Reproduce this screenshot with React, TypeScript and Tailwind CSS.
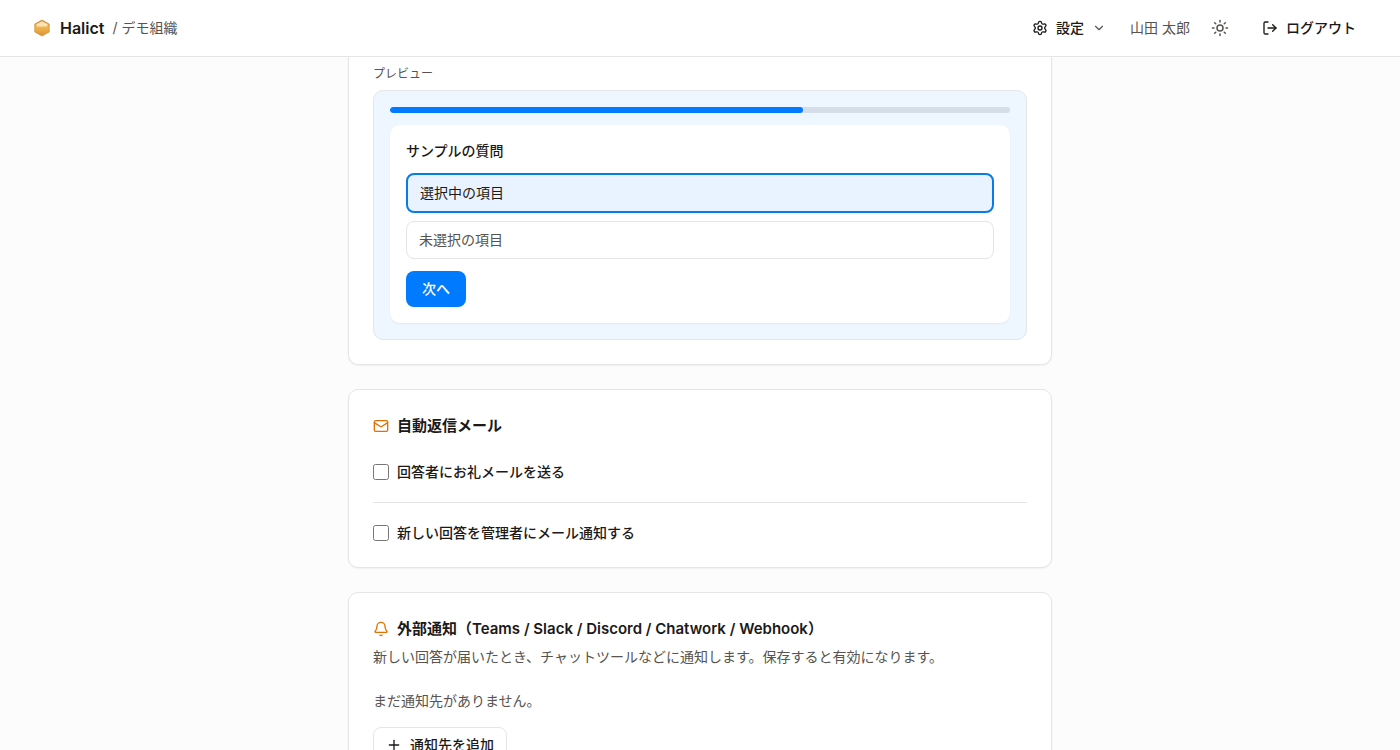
import type { ReactNode } from "react";
import { Bell, ChevronDown, LogOut, Mail, Plus, Settings, Sun } from "lucide-react";

function Logo() {
  return (
    <svg viewBox="0 0 20 20" className="size-5" aria-hidden="true">
      <defs>
        <linearGradient id="honey" x1="0" y1="0" x2="0" y2="1">
          <stop offset="0" stopColor="#c98a3c" />
          <stop offset="0.45" stopColor="#f2b650" />
          <stop offset="1" stopColor="#dc9234" />
        </linearGradient>
      </defs>
      <path
        d="M10 2 17.2 6v8L10 18 2.8 14V6Z"
        fill="url(#honey)"
        stroke="#cf9344"
        strokeWidth="0.8"
        strokeLinejoin="round"
      />
      <path d="M10 3.2 16 6.4 14.6 8.4H5.4L4 6.4Z" fill="#fbe3b4" />
    </svg>
  );
}

function Header() {
  return (
    <header className="sticky top-0 z-10 flex h-[57px] items-center justify-between border-b border-[#e5e5e4] bg-white px-8">
      <div className="flex items-center gap-2">
        <a href="#" className="flex items-center gap-2 text-base font-semibold">
          <Logo />
          Halict
        </a>
        <span className="text-sm text-[#57534e]">/ デモ組織</span>
      </div>
      <nav className="flex items-center gap-3 text-sm">
        <button type="button" className="flex h-9 items-center gap-2 rounded-md px-3 font-medium">
          <Settings className="size-4" />
          設定
          <ChevronDown className="size-3.5 text-[#57534e]" />
        </button>
        <span className="text-[#57534e]">山田 太郎</span>
        <button
          type="button"
          aria-label="テーマ切り替え"
          className="flex size-9 items-center justify-center rounded-md text-[#57534e]"
        >
          <Sun className="size-[18px]" />
        </button>
        <button type="button" className="flex h-9 items-center gap-2 rounded-md px-3 font-medium">
          <LogOut className="size-4" />
          ログアウト
        </button>
      </nav>
    </header>
  );
}

function SectionTitle({ icon, children }: { icon: ReactNode; children: ReactNode }) {
  return (
    <h2 className="flex items-center gap-2 text-[15px] leading-6 font-semibold">
      <span className="text-[#e17100]">{icon}</span>
      {children}
    </h2>
  );
}

function Preview() {
  return (
    <section className="rounded-b-[10px] border border-t-0 border-[#e7e5e4] bg-white px-6 pt-[9px] pb-6 shadow-xs">
      <p className="mb-2 text-xs text-[#57534e]">プレビュー</p>
      <div className="rounded-[10px] border border-[#e4e6e9] bg-[#eef6ff] p-4">
        <div className="mb-3 h-1.5 overflow-hidden rounded-full bg-[#d5dde8]">
          <div className="h-full w-2/3 rounded-full bg-[#007bff]" />
        </div>
        <div className="rounded-[10px] bg-white p-4 shadow-xs">
          <p className="mb-3 text-sm font-medium">サンプルの質問</p>
          <div className="flex flex-col gap-2 text-sm">
            <div className="rounded-lg border-2 border-[#077be9] bg-[#e8f3ff] px-3 py-2">選択中の項目</div>
            <div className="rounded-lg border border-[#e7e5e4] px-3 py-2 text-[#57534e]">未選択の項目</div>
          </div>
          <button
            type="button"
            className="mt-3 rounded-lg bg-[#007bff] px-4 py-2 text-sm font-medium text-white"
          >
            次へ
          </button>
        </div>
      </div>
    </section>
  );
}

function CheckRow({ label }: { label: string }) {
  return (
    <label className="flex items-center gap-2 text-sm font-medium">
      <input type="checkbox" className="size-4" />
      {label}
    </label>
  );
}

export default function App() {
  return (
    <div className="min-h-screen bg-[#fcfcfc] font-['Inter','Noto_Sans_CJK_JP',sans-serif] text-[#1c1917]">
      <Header />
      <main className="mx-auto flex max-w-3xl flex-col gap-6 px-8 pb-8">
        <Preview />

        <section className="rounded-[10px] border border-[#e7e5e4] bg-white p-6 shadow-xs">
          <SectionTitle icon={<Mail className="size-4" />}>自動返信メール</SectionTitle>
          <div className="mt-6 flex flex-col gap-5">
            <CheckRow label="回答者にお礼メールを送る" />
            <hr className="border-[#e7e5e4]" />
            <CheckRow label="新しい回答を管理者にメール通知する" />
          </div>
        </section>

        <section className="rounded-[10px] border border-[#e7e5e4] bg-white p-6 shadow-xs">
          <SectionTitle icon={<Bell className="size-4" />}>
            外部通知（Teams / Slack / Discord / Chatwork / Webhook）
          </SectionTitle>
          <p className="mt-1.5 text-sm text-[#57534e]">
            新しい回答が届いたとき、チャットツールなどに通知します。保存すると有効になります。
          </p>
          <p className="mt-6 text-sm text-[#57534e]">まだ通知先がありません。</p>
          <button
            type="button"
            className="mt-4 flex h-9 items-center gap-2 rounded-lg border border-[#e7e5e4] px-3 text-sm font-medium"
          >
            <Plus className="size-4" />
            通知先を追加
          </button>
        </section>
      </main>
    </div>
  );
}
